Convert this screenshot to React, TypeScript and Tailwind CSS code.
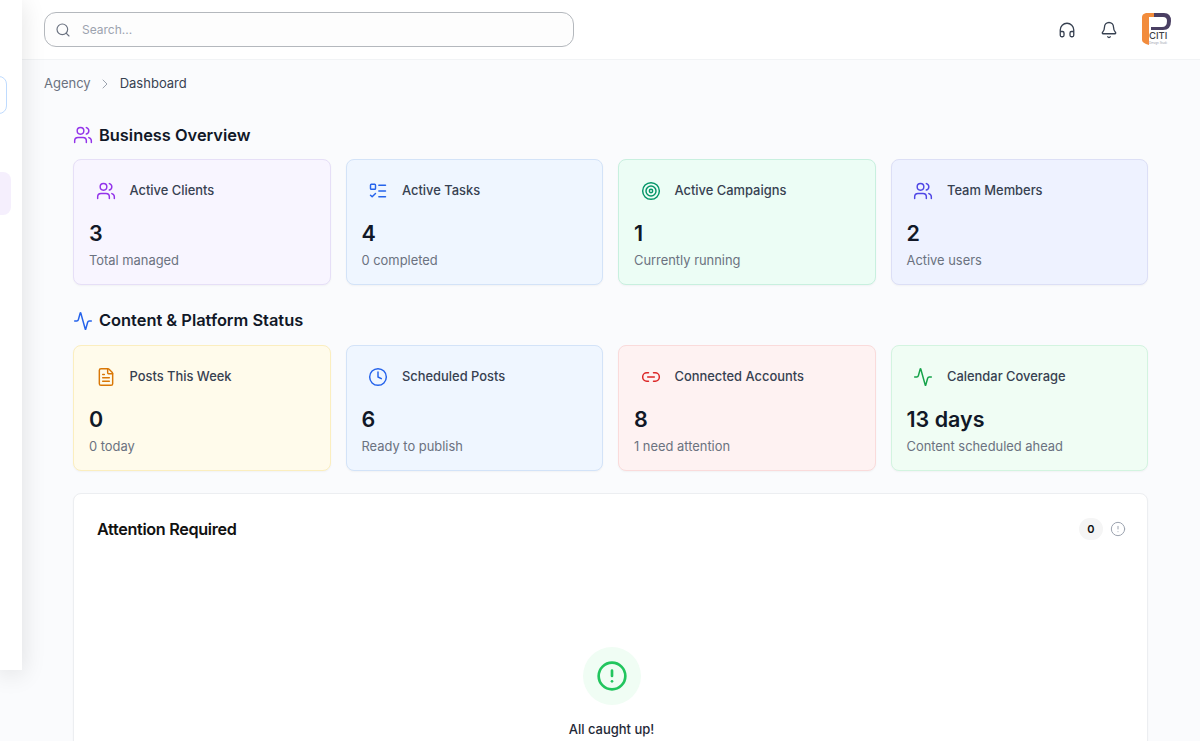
import { Activity, Bell, ChevronRight, CircleAlert, Clock, FileText, Headphones, Link2, ListTodo, Search, Target, Users } from "lucide-react"
import type { LucideIcon } from "lucide-react"

type Stat = {
  icon: LucideIcon
  label: string
  value: string
  sub: string
  box: string
  tint: string
}

const business: Stat[] = [
  { icon: Users, label: "Active Clients", value: "3", sub: "Total managed", box: "bg-[#f8f5ff] border-[#e6dff7]", tint: "text-[#9333ea]" },
  { icon: ListTodo, label: "Active Tasks", value: "4", sub: "0 completed", box: "bg-[#eff6ff] border-[#d3e3f8]", tint: "text-[#2563eb]" },
  { icon: Target, label: "Active Campaigns", value: "1", sub: "Currently running", box: "bg-[#ecfdf5] border-[#c8f0df]", tint: "text-[#059669]" },
  { icon: Users, label: "Team Members", value: "2", sub: "Active users", box: "bg-[#eef2ff] border-[#dcdff6]", tint: "text-[#4f46e5]" },
]

const content: Stat[] = [
  { icon: FileText, label: "Posts This Week", value: "0", sub: "0 today", box: "bg-[#fffbeb] border-[#fbeebf]", tint: "text-[#d97706]" },
  { icon: Clock, label: "Scheduled Posts", value: "6", sub: "Ready to publish", box: "bg-[#eff6ff] border-[#d3e3f8]", tint: "text-[#2563eb]" },
  { icon: Link2, label: "Connected Accounts", value: "8", sub: "1 need attention", box: "bg-[#fef2f2] border-[#fadbdb]", tint: "text-[#dc2626]" },
  { icon: Activity, label: "Calendar Coverage", value: "13 days", sub: "Content scheduled ahead", box: "bg-[#f0fdf4] border-[#d3f4e0]", tint: "text-[#16a34a]" },
]

function StatCard({ stat }: { stat: Stat }) {
  const Icon = stat.icon
  return (
    <div className={`h-[126px] rounded-lg border px-[15px] pt-[15px] shadow-[0_1px_2px_rgba(0,0,0,0.04)] ${stat.box}`}>
      <div className="flex h-[32px] items-center">
        <span className="ml-[6.5px] flex w-[20px] justify-center">
          <Icon className={`h-5 w-5 ${stat.tint}`} strokeWidth={1.75} />
        </span>
        <span className="ml-[14px] text-[12.9px] font-medium text-[#374151]">{stat.label}</span>
      </div>
      <div className="mt-[10px] text-[21.5px] leading-8 font-semibold text-[#111827]">{stat.value}</div>
      <div className="mt-[2px] text-[12.9px] leading-5 text-[#6b7280]">{stat.sub}</div>
    </div>
  )
}

function Section({ icon: Icon, tint, title, stats }: { icon: LucideIcon; tint: string; title: string; stats: Stat[] }) {
  return (
    <section>
      <div className="flex h-[28px] items-center gap-[6px] pt-[1px]">
        <Icon className={`h-5 w-5 ${tint}`} strokeWidth={1.75} />
        <h2 className="text-[16.4px] font-semibold text-[#111827]">{title}</h2>
      </div>
      <div className="mt-[10.5px] grid grid-cols-4 gap-[15px]">
        {stats.map((s) => (
          <StatCard key={s.label} stat={s} />
        ))}
      </div>
    </section>
  )
}

function Logo() {
  return (
    <svg width="30" height="33" viewBox="0 0 30 33">
      <path d="M0 4 Q0 1 4 0 H17 L14 4 H7 V32 Q0 30 0 27 Z" fill="#f28c3c" />
      <path d="M12 0 H22 Q29 0 29 8 Q29 17 21 17 H9 V14 H20 Q25 14 25 8 Q25 4 21 4 H12 Z" fill="#4a3f63" />
      <text x="7" y="26" fontSize="9.5" fontWeight="500" fill="#3f3f46" fontFamily="Inter, sans-serif">CITI</text>
      <text x="7" y="31" fontSize="3" fill="#9ca3af" fontFamily="Inter, sans-serif">Design Studi</text>
    </svg>
  )
}

export default function App() {
  return (
    <div className="flex h-[741px] overflow-hidden bg-[#fafbfd] font-['Inter',sans-serif]">
      <aside className="relative z-10 flex h-[670px] w-[22px] shrink-0 flex-col bg-white shadow-[0_4px_24px_rgba(0,0,0,0.12)]">
        <div className="mt-[76px] -ml-4 h-[38px] w-[23px] rounded-lg border border-[#bfdbfe]" />
        <div className="mt-[58px] -ml-4 h-[43px] w-[27px] rounded-lg bg-[#f5effd]" />
      </aside>
      <main className="min-w-0 flex-1">
        <header className="flex h-[60px] items-center justify-between border-b border-[#f1f3f5] bg-white pr-[28px] pl-[22px]">
          <div className="flex h-[35px] w-[530px] items-center rounded-xl border border-[#b4b8bd] bg-[#fdfdfd] pl-[10px]">
            <Search className="h-4 w-4 text-[#6b7280]" strokeWidth={1.75} />
            <span className="ml-[11px] text-xs text-[#9ca3af]">Search...</span>
          </div>
          <div className="flex items-center">
            <Headphones className="h-[18px] w-[18px] text-[#374151]" strokeWidth={1.75} />
            <Bell className="ml-[24px] h-[18px] w-[18px] text-[#374151]" strokeWidth={1.75} />
            <span className="ml-[24px] flex">
              <Logo />
            </span>
          </div>
        </header>
        <nav className="flex h-[47px] items-center pt-[1px] pl-[22px] text-[13px] text-[#6b7280]">
          <span>Agency</span>
          <ChevronRight className="mx-[6.5px] h-4 w-4 text-[#9ca3af]" strokeWidth={1.5} />
          <span className="text-[#374151]">Dashboard</span>
        </nav>
        <div className="flex flex-col gap-[21px] pt-[13.5px] pr-[52px] pl-[51px]">
          <Section icon={Users} tint="text-[#9333ea]" title="Business Overview" stats={business} />
          <Section icon={Activity} tint="text-[#2563eb]" title="Content & Platform Status" stats={content} />
          <div className="mt-[1.5px] h-[400px] rounded-lg border border-[#eceef1] bg-white pt-[23px] pr-[21px] pl-[23px] shadow-[0_1px_2px_rgba(0,0,0,0.04)]">
            <div className="flex items-center justify-between">
              <h3 className="text-[16.2px] font-semibold tracking-[-0.02em] text-[#111111]">Attention Required</h3>
              <div className="flex items-center gap-[7px]">
                <span className="flex h-[22px] w-[24px] items-center justify-center rounded-full bg-[#f5f5f5] text-[11px] font-semibold text-[#111111]">0</span>
                <CircleAlert className="h-4 w-4 text-[#9ca3af]" strokeWidth={1.5} />
              </div>
            </div>
            <div className="mt-[106px] flex flex-col items-center">
              <span className="flex h-[58px] w-[58px] items-center justify-center rounded-full bg-[#f0fdf4]">
                <CircleAlert className="h-8 w-8 text-[#22c55e]" strokeWidth={2} />
              </span>
              <p className="mt-[15px] text-[13px] font-medium text-[#1f2937]">All caught up!</p>
            </div>
          </div>
        </div>
      </main>
    </div>
  )
}
